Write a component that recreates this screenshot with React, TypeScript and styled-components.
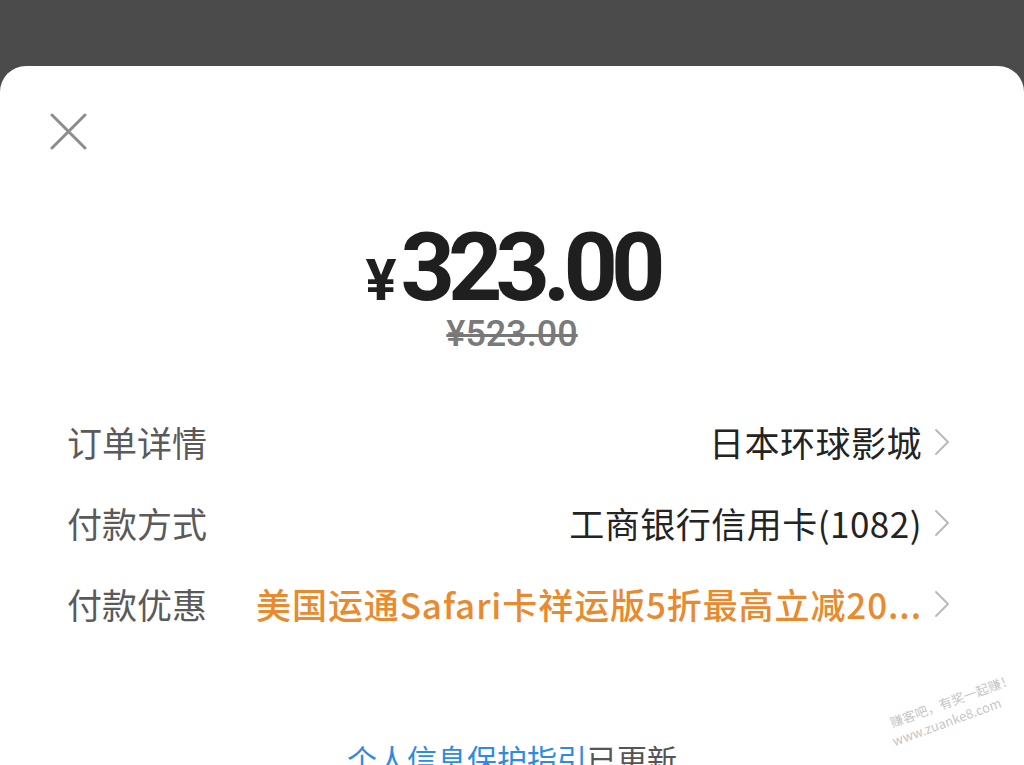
import React from "react";
import styled, { createGlobalStyle } from "styled-components";

const Global = createGlobalStyle`
  html, body {
    margin: 0;
    padding: 0;
    background: #4b4b4b;
    overflow: hidden;
  }
  #root {
    width: 1024px;
    height: 765px;
    overflow: hidden;
  }
`;

const Sheet = styled.div`
  position: relative;
  margin-top: 66px;
  height: 699px;
  background: #ffffff;
  border-radius: 26px 26px 0 0;
  overflow: hidden;
  display: flex;
  flex-direction: column;
  font-family: "Noto Sans CJK SC", "Noto Sans", sans-serif;
`;

const CloseButton = styled.div`
  margin: 47px 0 0 50px;
  width: 37px;
  height: 37px;
  display: flex;
`;

const PriceRow = styled.div`
  margin-top: 70px;
  display: flex;
  justify-content: center;
  align-items: baseline;
  font-family: Roboto, "Liberation Sans", sans-serif;
  font-weight: 700;
  color: #1f1f1f;
  line-height: 1;
`;

const Yen = styled.span`
  font-size: 58px;
  margin-right: 4px;
`;

const Amount = styled.span`
  font-size: 95px;
  letter-spacing: -7px;
`;

const OldPrice = styled.div`
  margin-top: 1px;
  text-align: center;
  font-family: Roboto, "Liberation Sans", sans-serif;
  font-weight: 500;
  font-size: 36px;
  line-height: 1;
  color: #7a7a7a;
  text-decoration: line-through;
  text-decoration-thickness: 3px;
  text-decoration-color: #777;
`;

const Divider = styled.div`
  margin: 25px 66px 0;
  height: 2px;
  background: #f2f2f2;
`;

const List = styled.div`
  margin: 24px 74px 0 67px;
  display: flex;
  flex-direction: column;
`;

const Row = styled.div`
  height: 81px;
  display: flex;
  align-items: center;
  gap: 46px;
`;

const Label = styled.div`
  flex: none;
  font-size: 35px;
  color: #5a5a5a;
`;

const Value = styled.div<{ $accent?: boolean }>`
  flex: 1;
  min-width: 0;
  text-align: right;
  white-space: nowrap;
  font-size: 35px;
  letter-spacing: ${(p) => (p.$accent ? "0.9px" : "0.5px")};
  font-weight: ${(p) => (p.$accent ? 500 : 400)};
  color: ${(p) => (p.$accent ? "#e88a2d" : "#232323")};
`;

const Chevron = styled.svg`
  flex: none;
  margin-left: -34px;
  width: 16px;
  height: 28px;
`;

const Notice = styled.div`
  margin-top: 99px;
  text-align: center;
  font-size: 30px;
  line-height: 1;
  color: #555;
`;

const NoticeLink = styled.span`
  color: #2f8be0;
`;

const Watermark = styled.div`
  position: absolute;
  left: 884px;
  top: 651px;
  transform: rotate(-20deg);
  transform-origin: left top;
  font-family: "Noto Sans CJK SC", "Liberation Sans", sans-serif;
  font-size: 13px;
  line-height: 16px;
  color: #c6c6c6;
  display: flex;
  flex-direction: column;
  align-items: flex-start;
  gap: 2px;
`;

const WatermarkLine = styled.span<{ $indent?: number }>`
  padding-left: ${(p) => p.$indent ?? 0}px;
  white-space: nowrap;
`;

const ChevronIcon = () => (
  <Chevron viewBox="0 0 16 28">
    <polyline
      points="2,2 14,14 2,26"
      fill="none"
      stroke="#b9b9b9"
      strokeWidth="2"
      strokeLinecap="round"
      strokeLinejoin="round"
    />
  </Chevron>
);

const rows = [
  { label: "订单详情", value: "日本环球影城" },
  { label: "付款方式", value: "工商银行信用卡(1082)" },
  { label: "付款优惠", value: "美国运通Safari卡祥运版5折最高立减20...", accent: true },
];

export default function App() {
  return (
    <>
      <Global />
      <Sheet>
        <CloseButton>
          <svg width="37" height="37" viewBox="0 0 37 37">
            <path
              d="M2 2 L35 35 M35 2 L2 35"
              stroke="#8c8c8c"
              strokeWidth="3"
              strokeLinecap="round"
              fill="none"
            />
          </svg>
        </CloseButton>
        <PriceRow>
          <Yen>¥</Yen>
          <Amount>323.00</Amount>
        </PriceRow>
        <OldPrice>¥523.00</OldPrice>
        <Divider />
        <List>
          {rows.map((r) => (
            <Row key={r.label}>
              <Label>{r.label}</Label>
              <Value $accent={r.accent}>{r.value}</Value>
              <ChevronIcon />
            </Row>
          ))}
        </List>
        <Notice>
          <NoticeLink>个人信息保护指引</NoticeLink>已更新
        </Notice>
        <Watermark>
          <WatermarkLine $indent={4}>赚客吧，有奖一起赚！</WatermarkLine>
          <WatermarkLine>www.zuanke8.com</WatermarkLine>
        </Watermark>
      </Sheet>
    </>
  );
}
